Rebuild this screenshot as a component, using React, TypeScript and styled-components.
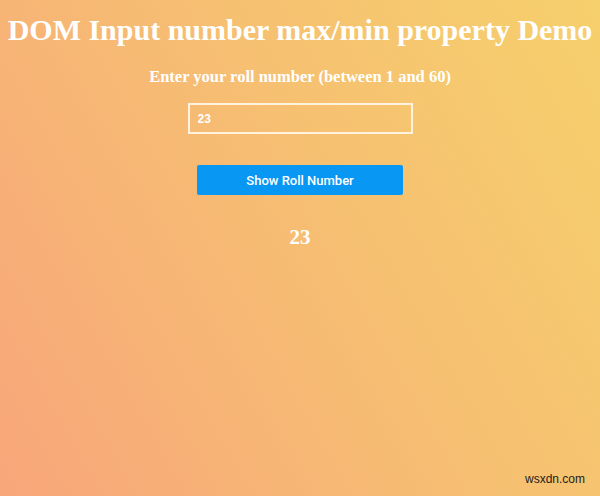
import { useState } from "react";
import styled, { createGlobalStyle } from "styled-components";

const GlobalStyle = createGlobalStyle`
  html, body {
    margin: 0;
    padding: 0;
  }
  body {
    font-family: "Liberation Serif", serif;
  }
`;

export default function App() {
  const [roll, setRoll] = useState("23");
  const [shown, setShown] = useState("23");

  return (
    <Page>
      <GlobalStyle />
      <Title>DOM Input number max/min property Demo</Title>
      <Label htmlFor="roll">Enter your roll number (between 1 and 60)</Label>
      <RollInput
        id="roll"
        type="number"
        min={1}
        max={60}
        value={roll}
        onChange={(e) => setRoll(e.target.value)}
      />
      <ShowButton onClick={() => setShown(roll)}>Show Roll Number</ShowButton>
      <Result>{shown}</Result>
      <Watermark>wsxdn.com</Watermark>
    </Page>
  );
}

const Page = styled.main`
  position: relative;
  width: 600px;
  height: 496px;
  box-sizing: border-box;
  display: flex;
  flex-direction: column;
  align-items: center;
  padding-top: 13px;
  background: linear-gradient(60deg, #f8a67a 0%, #f6bf72 55%, #f6d06c 100%);
  color: #fff;
  overflow: hidden;
`;

const Title = styled.h1`
  margin: 0;
  font-size: 30px;
  line-height: 34px;
  font-weight: bold;
  white-space: nowrap;
`;

const Label = styled.label`
  margin-top: 21px;
  font-size: 16.5px;
  font-weight: bold;
  line-height: 18px;
`;

const RollInput = styled.input`
  margin-top: 17px;
  width: 225px;
  height: 31px;
  box-sizing: border-box;
  border: 2px solid #fff3df;
  background: transparent;
  color: #fff;
  font-family: "Liberation Sans", Arial, sans-serif;
  font-weight: bold;
  font-size: 12px;
  padding: 0 8px;
  outline: none;
  -moz-appearance: textfield;

  &::-webkit-inner-spin-button,
  &::-webkit-outer-spin-button {
    -webkit-appearance: none;
    margin: 0;
  }
`;

const ShowButton = styled.button`
  margin-top: 31px;
  width: 206px;
  height: 30px;
  border: none;
  border-radius: 2px;
  background: #0897f2;
  color: #fff;
  font-family: Roboto, "Liberation Sans", Arial, sans-serif;
  font-weight: 500;
  font-size: 13px;
  cursor: pointer;
`;

const Result = styled.h2`
  margin: 30px 0 0;
  font-size: 21px;
  line-height: 24px;
  font-weight: bold;
`;

const Watermark = styled.span`
  position: absolute;
  right: 15px;
  bottom: 10px;
  font-family: "Liberation Sans", Arial, sans-serif;
  font-size: 12px;
  color: #222;
`;
